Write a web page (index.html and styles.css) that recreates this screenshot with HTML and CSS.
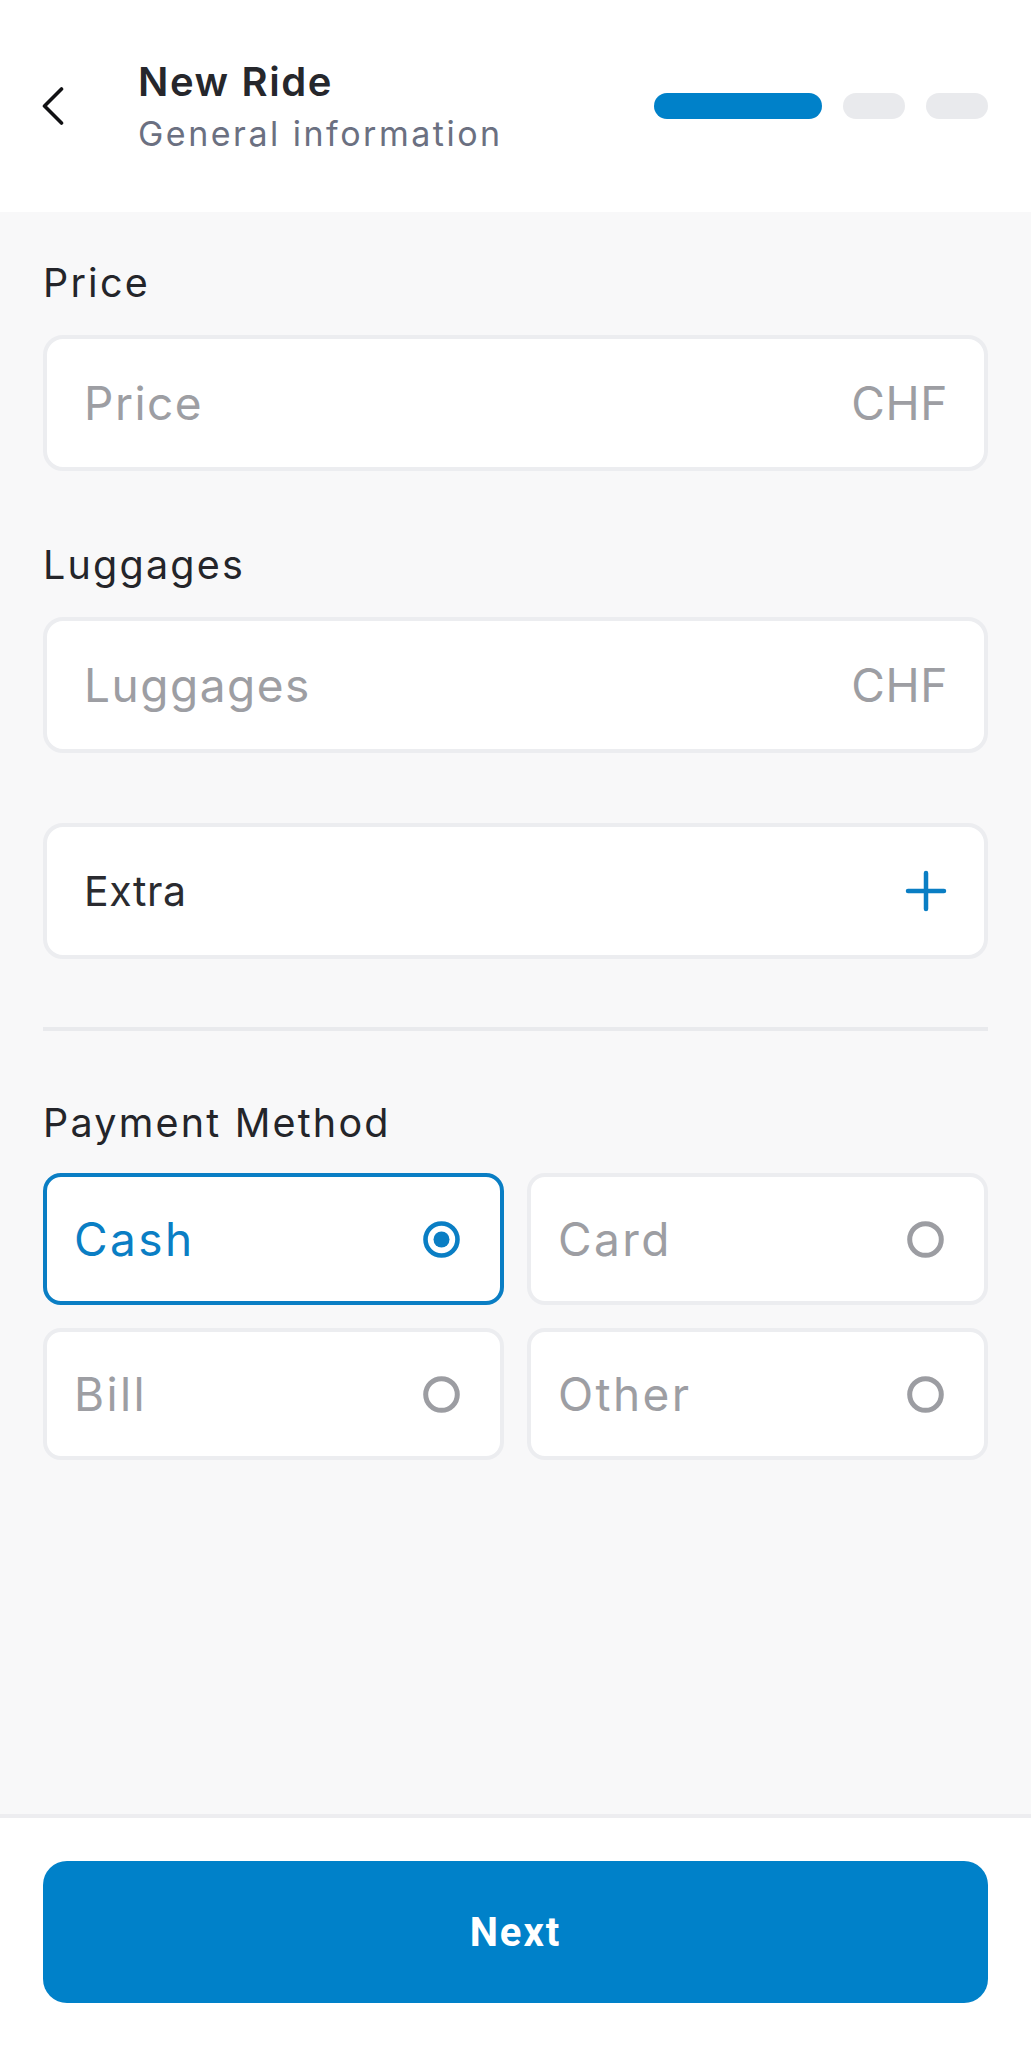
FILE: index.html
```html
<!DOCTYPE html>
<html lang="en">
<head>
<meta charset="utf-8">
<title>New Ride</title>
<link rel="stylesheet" href="styles.css">
</head>
<body>
<div class="screen">
  <header class="topbar">
    <button class="back" aria-label="Back">
      <svg width="25" height="38" viewBox="0 0 25 38"><polyline points="21.5,2 4.5,19 21.5,36" fill="none" stroke="#111114" stroke-width="3.6" stroke-linecap="round" stroke-linejoin="round"/></svg>
    </button>
    <div class="titles">
      <h1 class="title">New Ride</h1>
      <p class="subtitle">General information</p>
    </div>
    <div class="steps">
      <span class="step active"></span>
      <span class="step"></span>
      <span class="step"></span>
    </div>
  </header>

  <main class="content">
    <div class="group">
      <div class="label">Price</div>
      <div class="field"><span class="placeholder">Price</span><span class="suffix">CHF</span></div>
    </div>

    <div class="group">
      <div class="label">Luggages</div>
      <div class="field"><span class="placeholder">Luggages</span><span class="suffix">CHF</span></div>
    </div>

    <div class="field extra">
      <span class="extra-text">Extra</span>
      <svg class="plus" width="42" height="42" viewBox="0 0 42 42"><path d="M21 3v36M3 21h36" fill="none" stroke="#0A7EC4" stroke-width="4.5" stroke-linecap="round"/></svg>
    </div>

    <hr class="divider">

    <div class="label payment-label">Payment Method</div>
    <div class="options">
      <div class="option selected">
        <span>Cash</span>
        <svg class="radio" width="37" height="37" viewBox="0 0 37 37"><circle cx="18.5" cy="18.5" r="16" fill="none" stroke="#0A7EC4" stroke-width="4.6"/><circle cx="18.5" cy="18.5" r="8" fill="#0A7EC4"/></svg>
      </div>
      <div class="option">
        <span>Card</span>
        <svg class="radio" width="37" height="37" viewBox="0 0 37 37"><circle cx="18.5" cy="18.5" r="15.8" fill="none" stroke="#9C9DA2" stroke-width="5"/></svg>
      </div>
      <div class="option">
        <span>Bill</span>
        <svg class="radio" width="37" height="37" viewBox="0 0 37 37"><circle cx="18.5" cy="18.5" r="15.8" fill="none" stroke="#9C9DA2" stroke-width="5"/></svg>
      </div>
      <div class="option">
        <span>Other</span>
        <svg class="radio" width="37" height="37" viewBox="0 0 37 37"><circle cx="18.5" cy="18.5" r="15.8" fill="none" stroke="#9C9DA2" stroke-width="5"/></svg>
      </div>
    </div>
  </main>

  <footer class="footer">
    <button class="next">Next</button>
  </footer>
</div>
</body>
</html>
```

FILE: styles.css
```css
* { box-sizing: border-box; }

html, body {
  margin: 0;
  padding: 0;
}

body {
  font-family: "Inter", "Noto Sans", sans-serif;
  background: #F8F8F9;
  color: #25262B;
}

.screen {
  min-height: 2048px;
  display: flex;
  flex-direction: column;
}

/* Header */
.topbar {
  height: 212px;
  background: #FFFFFF;
  display: flex;
  align-items: center;
  padding: 0 43px 0 40px;
}

.back {
  width: 25px;
  height: 38px;
  padding: 0;
  border: 0;
  background: none;
  margin-right: 73px;
  display: block;
  flex-shrink: 0;
}

.back svg { display: block; }

.titles {
  display: flex;
  flex-direction: column;
}

.title {
  margin: 0;
  font-size: 40px;
  line-height: 48px;
  font-weight: 600;
  color: #26272C;
  letter-spacing: 1.6px;
}

.subtitle {
  margin: 7px 0 0;
  font-size: 34px;
  line-height: 42px;
  font-weight: 400;
  color: #6B7081;
  letter-spacing: 2.5px;
}

.steps {
  margin-left: auto;
  display: flex;
  gap: 21px;
}

.step {
  width: 62px;
  height: 26px;
  border-radius: 13px;
  background: #E9EAED;
}

.step.active {
  width: 168px;
  background: #0081C9;
}

/* Content */
.content {
  flex: 1;
  padding: 47px 43px 0;
}

.group { margin-bottom: 70px; }

.label {
  font-size: 39.5px;
  line-height: 48px;
  color: #24252A;
  margin-bottom: 28px;
  letter-spacing: 2.2px;
}

.field {
  height: 136px;
  background: #FFFFFF;
  border: 4px solid #ECEDF0;
  border-radius: 20px;
  display: flex;
  align-items: center;
  justify-content: space-between;
  padding: 0 36px 0 37px;
}

.placeholder,
.suffix {
  font-size: 46px;
  line-height: 56px;
  color: #9D9EA3;
  letter-spacing: 1.5px;
}

.suffix { letter-spacing: 0.6px; }

.field.extra {
  margin-bottom: 68px;
  padding-right: 37px;
}

.extra-text {
  font-size: 41px;
  line-height: 50px;
  color: #2A2B30;
  letter-spacing: 0.6px;
}

.plus { display: block; }

.divider {
  margin: 0 0 68px;
  height: 4px;
  border: 0;
  background: #E9EAED;
}

.payment-label { margin-bottom: 26px; }

.options {
  display: grid;
  grid-template-columns: 1fr 1fr;
  column-gap: 23px;
  row-gap: 23px;
}

.option {
  height: 132px;
  background: #FFFFFF;
  border: 4px solid #ECEDF0;
  border-radius: 18px;
  display: flex;
  align-items: center;
  justify-content: space-between;
  padding: 0 40px 0 27px;
  font-size: 46px;
  line-height: 56px;
  color: #9D9EA3;
  letter-spacing: 2.4px;
}

.option.selected {
  border-color: #0A7EC4;
  color: #0A7EC4;
}

.radio { display: block; }

/* Footer */
.footer {
  background: #FFFFFF;
  border-top: 4px solid #EDEDF0;
  padding: 43px 43px 45px;
}

.next {
  display: block;
  width: 100%;
  height: 142px;
  border: 0;
  border-radius: 24px;
  background: #0081C9;
  color: #FFFFFF;
  font-family: "Roboto", "Liberation Sans", sans-serif;
  font-weight: 700;
  font-size: 40px;
  letter-spacing: 2px;
}
```
